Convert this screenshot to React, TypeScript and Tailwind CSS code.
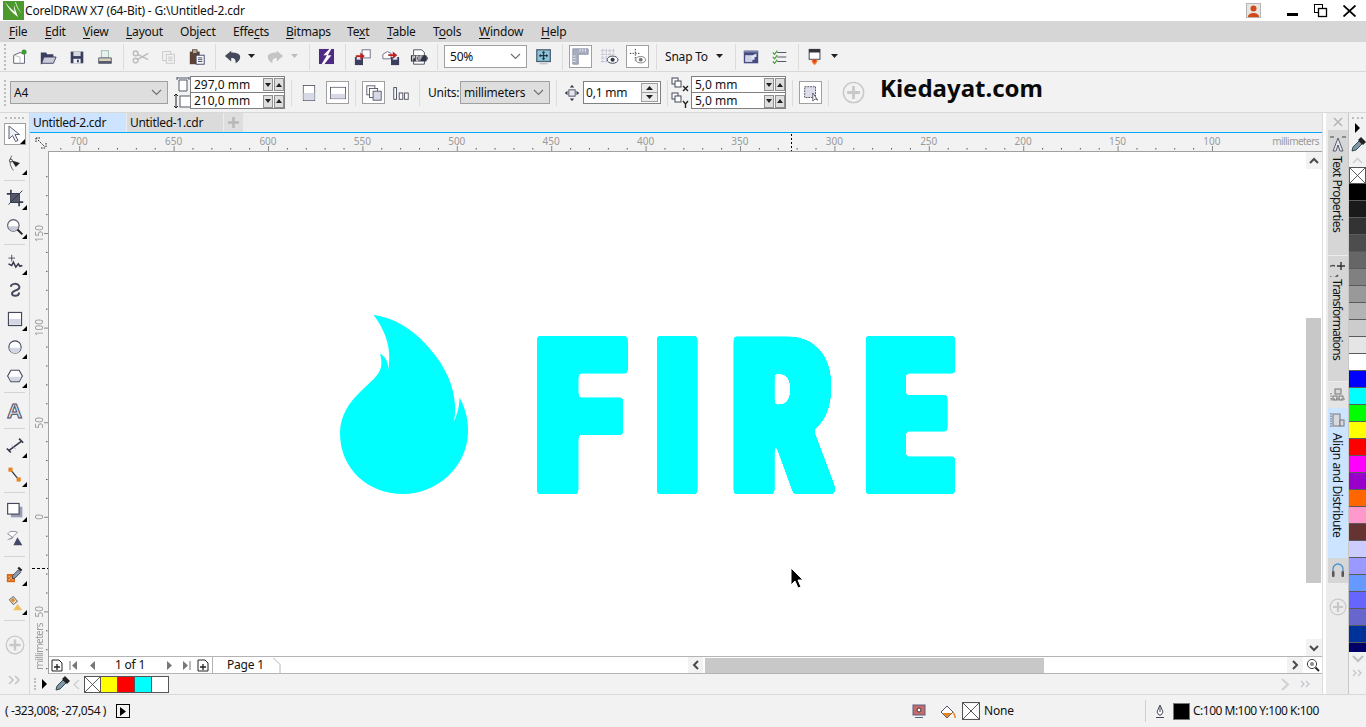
import type { ReactNode } from "react";

const ui = "font-['Noto_Sans','Open_Sans',sans-serif]";

function S({ children, w = 22, h = 22 }: { children: ReactNode; w?: number; h?: number }) {
  return (
    <svg width={w} height={h} viewBox={`0 0 ${w} ${h}`} fill="none">
      {children}
    </svg>
  );
}

function Btn({ children, className = "" }: { children?: ReactNode; className?: string }) {
  return <div className={`flex h-[24px] w-[28px] shrink-0 items-center justify-center [&>svg]:scale-90 ${className}`}>{children}</div>;
}

function Narrow({ children, className = "" }: { children?: ReactNode; className?: string }) {
  return <div className={`flex h-[24px] shrink-0 items-center justify-center ${className}`}>{children}</div>;
}

function Toggled({ children, className = "" }: { children?: ReactNode; className?: string }) {
  return (
    <div className={`flex h-[23px] w-[23px] shrink-0 items-center justify-center border border-[#a0a0a0] bg-white [&>svg]:scale-90 ${className}`}>
      {children}
    </div>
  );
}

function Sep({ className = "" }: { className?: string }) {
  return <div className={`h-[26px] w-px shrink-0 bg-[#dcdcdc] ${className}`} />;
}

function Grip({ className = "" }: { className?: string }) {
  return <div className={`h-[26px] w-[2px] shrink-0 border-l-2 border-dotted border-[#bdbdbd] ${className}`} />;
}

function Caret({ className = "" }: { className?: string }) {
  return (
    <svg width="8" height="5" viewBox="0 0 8 5" className={`shrink-0 ${className}`}>
      <path d="M0 0h7L3.5 4z" fill="currentColor" />
    </svg>
  );
}

function Chevron() {
  return (
    <svg width="11" height="7" viewBox="0 0 11 7" fill="none">
      <path d="M1 1l4.5 4.5L10 1" stroke="#707070" strokeWidth="1.2" />
    </svg>
  );
}

function Combo({ label, className }: { label: string; className: string }) {
  return (
    <div className={`flex h-[23px] shrink-0 items-center justify-between border border-[#a0a0a0] pl-[3px] pr-[5px] text-[12px] text-[#111] ${className}`}>
      <span>{label}</span>
      <Chevron />
    </div>
  );
}

function SpinRow({ value, top }: { value: string; top?: boolean }) {
  return (
    <div className={`flex h-[16px] items-center ${top ? "border-b border-[#808080]" : ""}`}>
      <span className="w-[73px] pl-[3px] text-[12px] leading-none tracking-normal text-[#111]">{value}</span>
      <span className="mr-px flex h-[13px] w-[10px] items-center justify-center border border-[#909090] bg-[#dedede] text-[#222]">
        <svg width="6" height="4" viewBox="0 0 6 4"><path d="M0 0h6L3 4z" fill="currentColor" /></svg>
      </span>
      <span className="flex h-[13px] w-[10px] items-center justify-center border border-[#909090] bg-[#dedede] text-[#222]">
        <svg width="6" height="4" viewBox="0 0 6 4"><path d="M0 4h6L3 0z" fill="currentColor" /></svg>
      </span>
    </div>
  );
}

function Spin({ a, b }: { a: string; b: string }) {
  return (
    <div className="h-[33px] w-[95px] shrink-0 border border-[#808080] bg-white">
      <SpinRow value={a} top />
      <SpinRow value={b} />
    </div>
  );
}

function Plus({ size = 25 }: { size?: number }) {
  return (
    <svg width={size} height={size} viewBox="0 0 25 25" fill="none">
      <circle cx="12.5" cy="12.5" r="11" stroke="#c8c8c8" strokeWidth="1.6" />
      <path d="M12.5 5.5v14M5.5 12.5h14" stroke="#c8c8c8" strokeWidth="3" />
    </svg>
  );
}

const navy = "#3a3f5e";

const icons = {
  coreldraw: (
    <S w={21} h={19}>
      <rect width="21" height="19" fill="#4c9a2e" />
      <path d="M2 1c3 6 7 11 13 15-2-5-3-8-4-12 0 3 0 5 1 7C8 8 5 5 2 1z" fill="#fff" />
      <path d="M13 1c1 4 3 8 6 12-3-3-6-7-7-12z" fill="#cfe8c0" />
    </S>
  ),
  newDoc: (
    <S>
      <path d="M4 9l7-3 5 2v10H4z" fill="#fff" stroke="#55586a" />
      <path d="M4 9l7 2v7" stroke="#b5b5c0" />
      <circle cx="15.5" cy="5.5" r="2.8" fill="#3f9a38" />
    </S>
  ),
  open: (
    <S>
      <path d="M3 6h6l1 2h7v3H7l-3 8H3z" fill={navy} />
      <path d="M6.5 11H20l-3 7H4z" fill="#c9ccd8" stroke={navy} />
    </S>
  ),
  save: (
    <S>
      <path d="M4 5h14v13H4z" fill={navy} />
      <rect x="7" y="5" width="8" height="5" fill="#d8dae2" />
      <rect x="7" y="13" width="8" height="5" fill="#f0f0f4" />
      <rect x="11" y="14" width="2" height="3" fill={navy} />
    </S>
  ),
  print: (
    <S>
      <rect x="7" y="4" width="8" height="8" fill="#e4f3ef" stroke="#9fb5b0" />
      <path d="M4 12h14v6H4z" fill="#d8d2bd" stroke="#55586a" />
      <rect x="4" y="15.5" width="14" height="2.5" fill="#55586a" />
    </S>
  ),
  cut: (
    <S>
      <circle cx="5" cy="7" r="2.6" stroke="#bcbcbc" strokeWidth="1.6" />
      <circle cx="5" cy="15" r="2.6" stroke="#bcbcbc" strokeWidth="1.6" />
      <path d="M7 8l12 6M7 14l12-7" stroke="#bcbcbc" strokeWidth="1.6" />
    </S>
  ),
  copy: (
    <S>
      <rect x="4" y="5" width="9" height="10" fill="#f2f2f2" stroke="#c8c8c8" />
      <rect x="8" y="8" width="9" height="10" fill="#f2f2f2" stroke="#c8c8c8" />
      <path d="M10 11h5M10 13h5M10 15h5" stroke="#c8c8c8" />
    </S>
  ),
  paste: (
    <S>
      <rect x="3" y="5" width="11" height="14" fill="#5a4334" />
      <rect x="6" y="3" width="5" height="4" fill="#b9b0a6" stroke="#5a4334" />
      <rect x="10" y="9" width="9" height="10" fill="#fff" stroke="#3a3f5e" />
      <path d="M12 12h5M12 14h5M12 16h5" stroke="#3a3f5e" />
    </S>
  ),
  undo: (
    <S>
      <path d="M9 4L2 10l7 6v-4c4 0 5 2 5 6 3-2 5-4 5-7 0-4-5-5-10-5z" fill="#444a5c" />
    </S>
  ),
  redo: (
    <S>
      <path d="M13 4l7 6-7 6v-4c-4 0-5 2-5 6-3-2-5-4-5-7 0-4 5-5 10-5z" fill="#c4c4c4" />
    </S>
  ),
  connect: (
    <S w={17} h={17}>
      <rect width="17" height="17" fill="#4f2a85" />
      <path d="M12 0L5 7h4L3 17h3l8-10h-4l4-7z" fill="#fff" />
    </S>
  ),
  importFile: (
    <S>
      <rect x="10" y="3" width="9" height="9" fill="#fff" stroke="#666a80" />
      <rect x="2" y="11" width="9" height="9" fill={navy} />
      <rect x="4" y="11" width="5" height="3" fill="#dde" />
      <path d="M3 9h5V6l5 4-5 4v-3H3z" fill="#c02020" />
    </S>
  ),
  exportFile: (
    <S>
      <path d="M2 8l5-3 4 2v6H2z" fill="#fff" stroke="#666a80" />
      <rect x="11" y="11" width="9" height="9" fill={navy} />
      <rect x="13" y="11" width="5" height="3" fill="#dde" />
      <path d="M8 8h5V5l5 4-5 4v-3H8z" fill="#c02020" />
    </S>
  ),
  pdf: (
    <S>
      <path d="M5 3h9l3 3v13H5z" fill="#fff" stroke="#44485a" />
      <rect x="2" y="9" width="17" height="7" fill="#2f3345" />
      <path d="M4 15v-5h2v2H4M8 15v-5h2v5H8M12 15v-5h3M12 12h2" stroke="#fff" strokeWidth=".9" />
      <path d="M19 9l2 3.5-2 3.5z" fill="#2f3345" />
    </S>
  ),
  fullscreen: (
    <S>
      <rect x="3" y="3" width="15" height="13" fill="#8ac6d6" stroke="#4b5c72" strokeWidth="1.4" />
      <path d="M10.5 5v9M6 9.5h9" stroke="#273248" strokeWidth="1.4" />
      <path d="M10.5 4.5l2 2h-4zM10.5 14.5l2-2h-4zM5.5 9.5l2-2v4zM15.5 9.5l-2-2v4z" fill="#273248" />
      <path d="M6 18.5h9" stroke="#a5adc0" />
    </S>
  ),
  rulers: (
    <S w={19} h={19}>
      <path d="M1 1h17v6H7v11H1z" fill="#a9aec0" stroke="#8d92a5" />
      <path d="M9 1v3M12 1v3M15 1v3M1 9h3M1 12h3M1 15h3" stroke="#eceef5" />
    </S>
  ),
  grid: (
    <S>
      <path d="M2 4h15M2 8h15M2 12h10M2 16h8M4 2v16M8 2v16M12 2v10M16 2v6" stroke="#a8acc4" strokeDasharray="1 1" />
      <ellipse cx="15" cy="14" rx="6" ry="4" fill="#fff" stroke="#33384a" />
      <circle cx="15" cy="14" r="2.3" fill="#33384a" />
    </S>
  ),
  guides: (
    <S w={20} h={20}>
      <path d="M1 6h11M7 1v13" stroke="#222" strokeDasharray="1.5 1.5" />
      <ellipse cx="13" cy="13" rx="5.5" ry="3.6" fill="#fff" stroke="#777" />
      <circle cx="13" cy="13" r="2.1" fill="#777" />
    </S>
  ),
  publish: (
    <S>
      <rect x="3" y="4" width="16" height="14" fill="#454a82" />
      <rect x="4.5" y="9" width="8" height="7.5" fill="#cfd2e4" />
      <path d="M11 10l6-3v4h-2v3h-3z" fill="#e5e6f0" />
      <rect x="3" y="4" width="16" height="2" fill="#7d82aa" />
    </S>
  ),
  checks: (
    <S>
      <path d="M8 6h10M8 11h10M8 16h10" stroke="#55586a" strokeWidth="1.2" />
      <path d="M3 6l2 2 3-4M3 11l2 2 3-4M3 16l2 2 3-4" stroke="#4b9c3c" strokeWidth="1.3" />
    </S>
  ),
  launcher: (
    <S>
      <rect x="4" y="2" width="13" height="12" fill="#33363f" />
      <rect x="5" y="6" width="11" height="7" fill="#fff" />
      <path d="M7 14c0 3 2 5 3.5 6 1.5-1 3.5-3 3.5-6z" fill="#f0802a" />
      <path d="M9 14c0 2 1 3 1.5 4 .5-1 1.5-2 1.5-4z" fill="#e03020" />
    </S>
  ),
  pageH: (
    <S w={14} h={15}>
      <path d="M3 3h8v11H3z" fill="#fff" stroke="#55586a" />
      <path d="M1 1h12M1 0v3M13 0v3" stroke="#55586a" />
    </S>
  ),
  pageV: (
    <S w={18} h={15}>
      <rect x="6" y="2" width="11" height="11" fill="#fff" stroke="#55586a" />
      <path d="M2 0v14M0 2l2-2 2 2M0 12l2 2 2-2" stroke="#222" />
    </S>
  ),
  portrait: (
    <S w={14} h={18}>
      <rect x=".5" y=".5" width="13" height="17" fill="#fff" stroke="#44485a" />
      <rect x="1" y="9" width="12" height="8" fill="#d8d9e6" />
    </S>
  ),
  landscape: (
    <S w={18} h={14}>
      <rect x=".5" y=".5" width="17" height="13" fill="#fff" stroke="#44485a" />
      <rect x="1" y="8" width="16" height="5" fill="#d8d9e6" />
    </S>
  ),
  allPages: (
    <S w={18} h={18}>
      <rect x="1" y="1" width="9" height="10" fill="#fff" stroke="#55586a" />
      <rect x="4" y="4" width="9" height="10" fill="#fff" stroke="#55586a" />
      <rect x="8" y="7" width="9" height="10" fill="#d8d9e6" stroke="#55586a" />
    </S>
  ),
  currentPage: (
    <S w={18} h={18}>
      <rect x="1" y="3" width="3" height="13" fill="#fff" stroke="#44485a" />
      <rect x="7" y="9" width="4" height="7" fill="#fff" stroke="#44485a" />
      <rect x="13" y="9" width="4" height="7" fill="#fff" stroke="#44485a" />
    </S>
  ),
  nudge: (
    <S w={16} h={18}>
      <rect x="4.5" y="5.5" width="7" height="7" fill="#e6e6ee" stroke="#44485a" />
      <path d="M8 0l2.5 3h-5zM8 18l2.5-3h-5zM0 9l3-2.5v5zM16 9l-3-2.5v5z" fill="#33384a" />
    </S>
  ),
  dupeX: (
    <S w={19} h={15}>
      <rect x="1" y="1" width="6" height="6" fill="#fff" stroke="#44485a" />
      <rect x="4" y="4" width="6" height="6" fill="#fff" stroke="#44485a" />
      <path d="M12 9l5 5M17 9l-5 5" stroke="#222" strokeWidth="1.4" />
    </S>
  ),
  dupeY: (
    <S w={19} h={16}>
      <rect x="1" y="1" width="6" height="6" fill="#fff" stroke="#44485a" />
      <rect x="4" y="4" width="6" height="6" fill="#fff" stroke="#44485a" />
      <path d="M12 9l2.500 3 2.500-3M14.500 12v4" stroke="#222" strokeWidth="1.4" />
    </S>
  ),
  treat: (
    <S w={20} h={20}>
      <rect x="3" y="3" width="12" height="12" fill="#dcdde8" stroke="#44485a" strokeDasharray="2 1" />
      <path d="M12 10v9l2.500-2.500 3 1.500z" fill="#fff" stroke="#55586a" />
    </S>
  ),
  pick: (
    <S w={16} h={18}>
      <path d="M2 1v13l3.500-3.500 3 6 2.500-1-3-6H12.500z" fill="#eef0f6" stroke="#5a5e72" />
    </S>
  ),
  shape: (
    <S>
      <path d="M7 2c-3 5-3 12 2 18" stroke="#44485a" />
      <circle cx="6" cy="8" r="1.800" fill="#fff" stroke="#222" />
      <path d="M7 8l10 3-5 5z" fill="#222" />
    </S>
  ),
  crop: (
    <S>
      <path d="M6 1v15h15M1 6h15v15" stroke="#33384a" strokeWidth="2" />
      <rect x="6" y="6" width="10" height="10" fill="#55586a" />
      <path d="M3 19L20 2" stroke="#33384a" strokeWidth="1.2" />
    </S>
  ),
  zoom: (
    <S>
      <circle cx="9" cy="9" r="7" fill="#fff" stroke="#55586a" strokeWidth="1.400" />
      <path d="M3 10a6 6 0 0012 0z" fill="#c8cad8" />
      <path d="M14 14l6 6" stroke="#222" strokeWidth="2.400" />
    </S>
  ),
  freehand: (
    <S>
      <path d="M7 1v8M3 5h8" stroke="#33384a" />
      <path d="M3 12l4 2 2-4 3 6 3-4 2 3 3-1" stroke="#33384a" strokeWidth="1.800" />
    </S>
  ),
  smart: (
    <S>
      <path d="M6 7c0-4 8-5 10-1s-4 5-7 7-2 5 2 5 5-2 5-4" stroke="#44485a" strokeWidth="2.400" />
    </S>
  ),
  rect: (
    <S>
      <rect x="3" y="3" width="16" height="16" fill="#fff" stroke="#44485a" strokeWidth="1.400" />
      <rect x="4" y="11" width="14" height="7" fill="#d4d6e2" />
    </S>
  ),
  ellipse: (
    <S>
      <circle cx="11" cy="11" r="7.500" fill="#fff" stroke="#44485a" strokeWidth="1.400" />
      <path d="M4 12h14a7 7 0 01-14 0z" fill="#d4d6e2" />
    </S>
  ),
  polygon: (
    <S>
      <path d="M6 4h10l4 7-4 7H6l-4-7z" fill="#fff" stroke="#44485a" strokeWidth="1.400" />
      <path d="M3 12h16l-3 5H6z" fill="#d4d6e2" />
    </S>
  ),
  dimension: (
    <S>
      <path d="M3 17L19 5" stroke="#33384a" strokeWidth="2" />
      <path d="M1 14l5 5M16 2l5 5" stroke="#33384a" strokeWidth="2" />
      <path d="M7 10l5 5" stroke="#9a9eb0" />
    </S>
  ),
  connector: (
    <S>
      <path d="M6 5l9 11" stroke="#33384a" strokeWidth="1.600" />
      <rect x="3" y="2" width="5" height="5" fill="#e8821e" />
      <rect x="13" y="14" width="5" height="5" fill="#e8821e" />
    </S>
  ),
  shadow: (
    <S>
      <rect x="6" y="7" width="14" height="13" fill="#9a9db5" />
      <rect x="2" y="3" width="14" height="13" fill="#fff" stroke="#44485a" strokeWidth="1.400" />
    </S>
  ),
  transparency: (
    <S>
      <path d="M2 6l6 4 6-6-3-1H5z" fill="#fff" stroke="#7a7e90" />
      <path d="M5 12l4-2M2 13l6-2" stroke="#7a7e90" />
      <path d="M14 10l6 10H9z" fill="#44496a" />
    </S>
  ),
  eyedrop: (
    <S>
      <rect x="1" y="11" width="10" height="10" fill="#d8661a" />
      <path d="M3 13h2v2H3zM7 13h2v2H7zM5 15h2v2H5zM3 17h2v2H3zM7 17h2v2H7z" fill="#f2b26a" />
      <path d="M8 13l7-7 3 3-7 7-3 1z" fill="#8a9ab0" stroke="#33384a" />
      <path d="M14 4l2-2 4 4-2 2z" fill="#222" />
    </S>
  ),
  fill: (
    <S>
      <path d="M4 7l5-4 5 6-5 4z" fill="#e8e0c0" stroke="#44485a" />
      <path d="M6 7l3-2 2 3-3 2z" fill="#e8821e" />
      <path d="M14 12l6 8H9z" fill="#f0c060" />
    </S>
  ),
  dropper: (
    <S w={16} h={16}>
      <path d="M2 14l1-4 6-6 3 3-6 6z" fill="#7d97a8" stroke="#33484f" />
      <path d="M8 3l3-3 5 5-3 3z" fill="#222" />
    </S>
  ),
};

const menus: { pre: string; key: string; post: string; w: string }[] = [
  { pre: "", key: "F", post: "ile", w: "w-[36px]" },
  { pre: "", key: "E", post: "dit", w: "w-[38px]" },
  { pre: "", key: "V", post: "iew", w: "w-[43px]" },
  { pre: "", key: "L", post: "ayout", w: "w-[54px]" },
  { pre: "Ob", key: "j", post: "ect", w: "w-[53px]" },
  { pre: "Effe", key: "c", post: "ts", w: "w-[53px]" },
  { pre: "", key: "B", post: "itmaps", w: "w-[61px]" },
  { pre: "Te", key: "x", post: "t", w: "w-[40px]" },
  { pre: "", key: "T", post: "able", w: "w-[46px]" },
  { pre: "T", key: "o", post: "ols", w: "w-[46px]" },
  { pre: "", key: "W", post: "indow", w: "w-[62px]" },
  { pre: "", key: "H", post: "elp", w: "w-[40px]" },
];

function TitleBar() {
  return (
    <div className="flex h-[21px] shrink-0 items-center bg-white">
      <div className="ml-[3px] mr-[1px] flex w-[21px]">{icons.coreldraw}</div>
      <span className="text-[12px] text-[#111]">CorelDRAW X7 (64-Bit) - G:\Untitled-2.cdr</span>
      <div className="ml-auto flex items-center">
        <svg width="15" height="15" viewBox="0 0 15 15">
          <rect width="15" height="15" fill="#b5b5b5" />
          <rect x="1" y="1" width="13" height="13" fill="#e9e4e0" />
          <circle cx="7.500" cy="5.500" r="3" fill="#d04a1c" />
          <path d="M2 14c0-3 3-4 5.500-4s5.500 1 5.500 4z" fill="#d04a1c" />
        </svg>
        <div className="ml-[26px] mt-[7px] h-[3px] w-[11px] bg-black" />
        <svg width="14" height="14" viewBox="0 0 14 14" fill="none" className="ml-[16px]">
          <rect x=".5" y=".5" width="8" height="8" stroke="#000" />
          <rect x="4.500" y="4.500" width="8" height="8" fill="#fff" stroke="#000" strokeWidth="1.300" />
        </svg>
        <svg width="13" height="12" viewBox="0 0 13 12" fill="none" className="ml-[15px] mr-[10px]">
          <path d="M.5.5l12 11M12.500.5l-12 11" stroke="#000" strokeWidth="1.800" />
        </svg>
      </div>
    </div>
  );
}

function MenuBar() {
  return (
    <div className="flex h-[21px] shrink-0 items-center bg-[#d6d6d6] pl-[9px] text-[12px] text-[#111]">
      {menus.map((m) => (
        <div key={m.pre + m.key + m.post} className={`shrink-0 ${m.w}`}>
          {m.pre}
          <span className="underline underline-offset-2">{m.key}</span>
          {m.post}
        </div>
      ))}
    </div>
  );
}

function StandardBar() {
  return (
    <div className="flex h-[30px] shrink-0 items-center border-b border-[#d8d8d8] bg-[#f2f2f2] text-[12px] text-[#111]">
      <Grip className="ml-[4px]" />
      <Btn>{icons.newDoc}</Btn>
      <Btn>{icons.open}</Btn>
      <Btn className="!w-[29px]">{icons.save}</Btn>
      <Btn>{icons.print}</Btn>
      <Sep className="ml-[4px] mr-[3px]" />
      <Btn>{icons.cut}</Btn>
      <Btn>{icons.copy}</Btn>
      <Btn>{icons.paste}</Btn>
      <Sep className="ml-[4px] mr-[3px]" />
      <Btn>{icons.undo}</Btn>
      <Narrow className="w-[10px] text-[#222]"><Caret /></Narrow>
      <Btn className="ml-[4px]">{icons.redo}</Btn>
      <Narrow className="w-[12px] text-[#bdbdbd]"><Caret /></Narrow>
      <Sep className="ml-[8px] mr-[2px]" />
      <Btn>{icons.connect}</Btn>
      <Sep className="ml-[5px] mr-[3px]" />
      <Btn>{icons.importFile}</Btn>
      <Btn>{icons.exportFile}</Btn>
      <Btn>{icons.pdf}</Btn>
      <Sep className="ml-[4px] mr-[6px]" />
      <Combo label="50%" className="w-[83px] border-[#808080] !pl-[5px] bg-white" />
      <Btn className="ml-[3px]">{icons.fullscreen}</Btn>
      <Sep className="ml-[4px] mr-[6px]" />
      <Toggled>{icons.rulers}</Toggled>
      <Btn className="ml-[3px]">{icons.grid}</Btn>
      <Toggled className="ml-[3px]">{icons.guides}</Toggled>
      <Sep className="ml-[7px]" />
      <span className="ml-[8px] w-[42px] shrink-0 whitespace-nowrap">Snap To</span>
      <Caret className="ml-[9px] text-[#222]" />
      <Sep className="ml-[11px]" />
      <Btn className="ml-[1px]">{icons.publish}</Btn>
      <Btn className="ml-[1px]">{icons.checks}</Btn>
      <Sep className="ml-[4px]" />
      <Btn className="ml-[2px]">{icons.launcher}</Btn>
      <Caret className="ml-[2px] text-[#222]" />
    </div>
  );
}

function PropertyBar() {
  return (
    <div className="flex h-[41px] shrink-0 items-center border-b border-[#d8d8d8] bg-[#f2f2f2] pt-[1px] text-[12px] text-[#111]">
      <Grip className="ml-[4px]" />
      <Combo label="A4" className="ml-[4px] w-[158px] bg-[#dedede]" />
      <div className="ml-[7px] flex w-[15px] shrink-0 flex-col items-center gap-[2px]">
        {icons.pageH}
        {icons.pageV}
      </div>
      <Spin a="297,0 mm" b="210,0 mm" />
      <Sep className="ml-[6px]" />
      <Btn className="ml-[5px] !w-[24px]">{icons.portrait}</Btn>
      <Toggled className="ml-[5px]">{icons.landscape}</Toggled>
      <Sep className="ml-[6px]" />
      <Toggled className="ml-[6px]">{icons.allPages}</Toggled>
      <Btn className="ml-[4px] !w-[24px]">{icons.currentPage}</Btn>
      <Sep className="ml-[6px]" />
      <span className="ml-[8px] w-[32px] shrink-0">Units:</span>
      <Combo label="millimeters" className="w-[90px] bg-[#dedede]" />
      <Sep className="ml-[6px]" />
      <Btn className="ml-[3px] !w-[23px]">{icons.nudge}</Btn>
      <div className="flex h-[23px] w-[78px] shrink-0 items-center justify-between border border-[#808080] bg-white pl-[2px] pr-[2px]">
        <span>0,1 mm</span>
        <span className="flex h-[19px] w-[17px] flex-col border border-[#a0a0a0] bg-[#ececec] text-[#222]">
          <span className="flex h-[9px] items-center justify-center border-b border-[#a0a0a0]">
            <svg width="7" height="4" viewBox="0 0 7 4"><path d="M0 4h7L3.500 0z" fill="currentColor" /></svg>
          </span>
          <span className="flex h-[8px] items-center justify-center">
            <svg width="7" height="4" viewBox="0 0 7 4"><path d="M0 0h7L3.500 4z" fill="currentColor" /></svg>
          </span>
        </span>
      </div>
      <Sep className="ml-[6px]" />
      <div className="flex w-[23px] shrink-0 flex-col items-center gap-0 pl-[2px]">
        {icons.dupeX}
        {icons.dupeY}
      </div>
      <Spin a="5,0 mm" b="5,0 mm" />
      <Sep className="ml-[6px]" />
      <Toggled className="ml-[6px]">{icons.treat}</Toggled>
      <Sep className="ml-[6px]" />
      <Narrow className="w-[48px]"><Plus size={23} /></Narrow>
      <span className="ml-[3px] mt-[-9px] font-['Noto_Sans',sans-serif] text-[24px] font-bold leading-none tracking-normal text-[#0a0a0a]">Kiedayat.com</span>
    </div>
  );
}

function Tool({ icon, className, more = true }: { icon: ReactNode; className: string; more?: boolean }) {
  return (
    <div className={`relative flex h-[22px] w-[22px] shrink-0 items-center justify-center self-center [&>svg:first-child]:h-[18px] [&>svg:first-child]:w-[18px] ${className}`}>
      {icon}
      {more && (
        <svg width="5" height="5" viewBox="0 0 5 5" className="absolute bottom-[-1px] right-[-1px]">
          <path d="M5 0v5H0z" fill="#000" />
        </svg>
      )}
    </div>
  );
}

function ToolSep({ className }: { className: string }) {
  return <div className={`mx-[4px] h-px shrink-0 bg-[#d4d4d4] ${className}`} />;
}

function Toolbox() {
  return (
    <div className="flex w-[30px] shrink-0 flex-col border-r border-[#d8d8d8] bg-[#f2f2f2]">
      <div className="mx-[5px] mt-[4px] h-[2px] border-t-2 border-dotted border-[#bdbdbd]" />
      <div className="relative mt-[4px] flex h-[22px] w-[22px] shrink-0 items-center justify-center self-center border border-[#a0a0a0] bg-white">
        {icons.pick}
        <svg width="5" height="5" viewBox="0 0 5 5" className="absolute bottom-0 right-0">
          <path d="M5 0v5H0z" fill="#000" />
        </svg>
      </div>
      <Tool icon={icons.shape} className="mt-[7px]" />
      <ToolSep className="mt-[6px]" />
      <Tool icon={icons.crop} className="mt-[6px]" />
      <Tool icon={icons.zoom} className="mt-[7px]" />
      <ToolSep className="mt-[6px]" />
      <Tool icon={icons.freehand} className="mt-[7px]" />
      <Tool icon={icons.smart} className="mt-[5px]" more={false} />
      <Tool icon={icons.rect} className="mt-[7px]" />
      <Tool icon={icons.ellipse} className="mt-[6px]" />
      <Tool icon={icons.polygon} className="mt-[7px]" />
      <ToolSep className="mt-[5px]" />
      <div className="relative mt-[7px] flex h-[22px] w-[22px] shrink-0 items-center justify-center self-center font-['Liberation_Sans',sans-serif] text-[21px] font-bold text-[#dfe1ea] [-webkit-text-stroke:1px_#4a4e62]">
        A
      </div>
      <ToolSep className="mt-[6px]" />
      <Tool icon={icons.dimension} className="mt-[6px]" />
      <Tool icon={icons.connector} className="mt-[7px]" />
      <ToolSep className="mt-[6px]" />
      <Tool icon={icons.shadow} className="mt-[6px]" />
      <Tool icon={icons.transparency} className="mt-[6px]" more={false} />
      <ToolSep className="mt-[7px]" />
      <Tool icon={icons.eyedrop} className="mt-[6px]" />
      <Tool icon={icons.fill} className="mt-[7px]" />
      <ToolSep className="mt-[6px]" />
      <div className="mt-[13px] flex h-[22px] shrink-0 items-center justify-center"><Plus size={20} /></div>
      <div className="mt-[13px] flex h-[22px] shrink-0 items-center justify-center">
        <svg width="14" height="10" viewBox="0 0 14 10" fill="none">
          <path d="M1 1l4 4-4 4M7 1l4 4-4 4" stroke="#c4c4cc" strokeWidth="1.600" />
        </svg>
      </div>
    </div>
  );
}

function Tabs() {
  return (
    <div className="flex h-[19px] shrink-0 items-stretch bg-[#ececec] text-[12px] leading-[19px] tracking-[-0.3px] text-[#111]">
      <div className="w-[96px] bg-[#cce4ff] pl-[3px]">Untitled-2.cdr</div>
      <div className="ml-px w-[96px] bg-[#dbdbdb] pl-[3px]">Untitled-1.cdr</div>
      <div className="ml-px flex w-[19px] items-center justify-center bg-[#dedede]">
        <svg width="11" height="11" viewBox="0 0 11 11"><path d="M5.500 0v11M0 5.500h11" stroke="#b8b8b8" strokeWidth="2.600" /></svg>
      </div>
    </div>
  );
}

const hLabels = [700, 650, 600, 550, 500, 450, 400, 350, 300, 250, 200, 150, 100];
const vLabels = [150, 100, 50, 0, 50];

function HRuler() {
  return (
    <div className="relative flex h-[18px] shrink-0 bg-[#f2f2f2] pl-[2px] pt-[1px] text-[10px] leading-[14px] tracking-normal text-[#9a9a9a]">
      {hLabels.map((n) => (
        <div key={n} className="w-[94.4px] shrink-0 text-center">{n}</div>
      ))}
      <span className="absolute right-[3px] top-[1px] tracking-[-0.55px]">millimeters</span>
      <svg width="1293" height="18" className="absolute left-0 top-0">
        {Array.from({ length: 66 }, (_, i) => {
          const x = 49.2 - 94.4 + i * 18.88;
          if (x < 18) return null;
          const major = i % 5 === 0;
          return <rect key={i} x={x} y={major ? 13 : 15} width="1" height={major ? 5 : 1.500} fill={major ? "#888" : "#555"} />;
        })}
        <path d="M761.500 1v17" stroke="#000" strokeDasharray="2 2" />
      </svg>
      <svg width="12" height="12" viewBox="0 0 12 12" fill="none" className="absolute left-[5px] top-[4px]">
        <path d="M1 1h4M1 1v4M3 3l7 7M11 6v5M6 11h5" stroke="#222" strokeDasharray="1.500 1" />
      </svg>
    </div>
  );
}

function VRuler() {
  return (
    <div className="relative flex h-[523px] w-[19px] shrink-0 flex-col border-r border-[#a0a0a0] bg-[#f2f2f2] pt-[35px] text-[10px] leading-none tracking-normal text-[#9a9a9a]">
      {vLabels.map((n, i) => (
        <div key={i} className="flex h-[94.600px] shrink-0 items-center pl-[4px]">
          <span className="rotate-180 [writing-mode:vertical-rl]">{n}</span>
        </div>
      ))}
      <span className="absolute bottom-[4px] left-[4px] rotate-180 tracking-[-0.55px] [writing-mode:vertical-rl]">millimeters</span>
      <svg width="18" height="523" className="absolute left-0 top-0">
        {Array.from({ length: 29 }, (_, i) => {
          const y = 82 - 3 * 18.92 + i * 18.92;
          const major = (i + 2) % 5 === 0;
          return <rect key={i} x={major ? 14 : 16} y={y} width={major ? 4 : 1.500} height="1" fill={major ? "#888" : "#555"} />;
        })}
        <path d="M2 417.500h16" stroke="#000" strokeDasharray="3 2" />
      </svg>
    </div>
  );
}

function ScrollArrow({ d, className = "" }: { d: string; className?: string }) {
  return (
    <div className={`flex shrink-0 items-center justify-center bg-[#f2f2f2] ${className}`}>
      <svg width="12" height="12" viewBox="0 0 12 12" fill="none">
        <path d={d} stroke="#4a4a4a" strokeWidth="2" />
      </svg>
    </div>
  );
}

function HeavyFilter({ id, r }: { id: string; r: string }) {
  return (
    <filter id={id} x="-30%" y="-30%" width="160%" height="160%">
      <feMorphology operator="dilate" radius={`${r} 0`} />
      <feGaussianBlur stdDeviation="2" />
      <feColorMatrix values="1 0 0 0 0  0 1 0 0 0  0 0 1 0 0  0 0 0 12 -5.500" />
    </filter>
  );
}

function Artwork() {
  return (
    <>
      <svg width="0" height="0" className="absolute">
        <defs>
          <HeavyFilter id="heavyI" r="0.5" />
          <HeavyFilter id="heavyF" r="3.5" />
          <HeavyFilter id="heavyE" r="4" />
          <HeavyFilter id="heavyR" r="5" />
        </defs>
      </svg>
      <svg width="150" height="200" viewBox="0 0 150 200" className="absolute left-[281px] top-[153px]">
        <path
          d="M43.500 10C62 12 84 24 100 44C116 62 124 82 125 100C125.500 106 125 112 123.500 117.500C127 110 129.500 102 129.500 92.500C135 102 138.500 115 138 127C137.500 161 108 189 73 189C38 189 10 164 10 128C10 110 20 97 30 87C40 77 49 71 51 62C52 57 51 53 50 48.500C58 53 61 63 55 75C60 64 60 50 58 40C56 30 50 18 43.500 10Z"
          fill="#00ffff"
        />
      </svg>
      <div className="absolute left-[488px] top-[188px] h-[158px] font-['Roboto',sans-serif] text-[207px] font-black leading-[158px] text-[#00ffff] [-webkit-text-stroke:10px_#00ffff]">
        <span className="absolute left-[-2px] top-0 origin-left scale-x-[0.782] whitespace-nowrap [filter:url(#heavyF)]">F</span>
        <span className="absolute left-[112px] top-0 origin-left scale-x-[0.9] whitespace-nowrap [filter:url(#heavyI)]">I</span>
        <span className="absolute left-[196px] top-0 origin-left scale-x-[0.727] whitespace-nowrap [filter:url(#heavyR)]">R</span>
        <span className="absolute left-[327px] top-0 origin-left scale-x-[0.75] whitespace-nowrap [filter:url(#heavyE)]">E</span>
      </div>
      <svg width="14" height="22" viewBox="0 0 14 22" className="absolute left-[741px] top-[415px]">
        <path d="M1 1v17l4-4 3 7 3-1-3-7h5z" fill="#000" stroke="#fff" />
      </svg>
    </>
  );
}

function PageRow() {
  return (
    <div className="flex h-[18px] shrink-0 items-center border-y border-[#b4b4b4] bg-white text-[12px] text-[#111]">
      <div className="flex w-[163px] shrink-0 items-center">
        <svg width="12" height="13" viewBox="0 0 12 13" fill="none" className="ml-[2px]">
          <path d="M1 1h7l3 3v8H1z" stroke="#222" /><path d="M6 5v6M3 8h6" stroke="#222" strokeWidth="1.300" />
        </svg>
        <svg width="9" height="9" viewBox="0 0 9 9" className="ml-[6px]"><path d="M1 0v9" stroke="#777" /><path d="M8 0v9L3 4.500z" fill="#777" /></svg>
        <svg width="7" height="9" viewBox="0 0 7 9" className="ml-[11px]"><path d="M6 0v9L1 4.500z" fill="#777" /></svg>
        <span className="ml-[11px] w-[46px] shrink-0 text-center leading-none">1 of 1</span>
        <svg width="7" height="9" viewBox="0 0 7 9" className="ml-[13px]"><path d="M1 0v9l5-4.500z" fill="#777" /></svg>
        <svg width="9" height="9" viewBox="0 0 9 9" className="ml-[9px]"><path d="M8 0v9" stroke="#777" /><path d="M1 0v9l5-4.500z" fill="#777" /></svg>
        <svg width="12" height="13" viewBox="0 0 12 13" fill="none" className="ml-[6px]">
          <path d="M1 1h7l3 3v8H1z" stroke="#222" /><path d="M6 5v6M3 8h6" stroke="#222" strokeWidth="1.300" />
        </svg>
      </div>
      <div className="relative flex h-[16px] w-[68px] shrink-0 items-center border-l border-[#b4b4b4] pl-[14px]">
        Page 1
        <svg width="8" height="16" viewBox="0 0 8 16" fill="none" className="absolute right-[-1px] top-0">
          <path d="M0 .500l7 7v8.500" stroke="#b4b4b4" />
        </svg>
      </div>
      <div className="flex h-full flex-1 items-stretch" />
      <ScrollArrow d="M8 2L4 6l4 4" className="mr-[2px] h-[16px] w-[15px]" />
      <div className="h-[15px] w-[339px] shrink-0 bg-[#c8c8c8]" />
      <div className="w-[243px] shrink-0" />
      <ScrollArrow d="M4 2l4 4-4 4" className="h-[16px] w-[16px]" />
      <div className="flex w-[19px] shrink-0 items-center justify-center">
        <svg width="14" height="14" viewBox="0 0 14 14" fill="none">
          <circle cx="6" cy="6" r="4.600" stroke="#444" />
          <circle cx="6" cy="6" r="2" fill="#888" />
          <path d="M9.500 9.500L13 13" stroke="#222" strokeWidth="1.800" />
        </svg>
      </div>
    </div>
  );
}

const docColors = ["bg-[#ffff00]", "bg-[#ff0000]", "bg-[#00ffff]", "bg-white"];

function NoneSwatch({ className }: { className: string }) {
  return (
    <svg viewBox="0 0 17 17" className={className} fill="none">
      <rect x=".5" y=".5" width="16" height="16" fill="#fff" stroke="#555" />
      <path d="M1 1l15 15M16 1L1 16" stroke="#333" strokeWidth=".8" />
    </svg>
  );
}

function DocPalette() {
  return (
    <div className="flex h-[20px] shrink-0 items-center bg-[#f2f2f2]">
      <div className="ml-[4px] h-[12px] w-[2px] border-l-2 border-dotted border-[#bdbdbd]" />
      <svg width="7" height="10" viewBox="0 0 7 10" className="ml-[5px]"><path d="M1 0v10l5-5z" fill="#000" /></svg>
      <div className="ml-[6px]">{icons.dropper}</div>
      <svg width="7" height="11" viewBox="0 0 7 11" fill="none" className="ml-[3px]"><path d="M6 1L1 5.500 6 10" stroke="#d0d0d0" strokeWidth="1.500" /></svg>
      <div className="ml-[4px] flex">
        <NoneSwatch className="h-[17px] w-[17px]" />
        {docColors.map((c) => (
          <div key={c} className={`ml-[-1px] h-[17px] w-[18px] border border-[#555] ${c}`} />
        ))}
      </div>
      <svg width="9" height="13" viewBox="0 0 9 13" fill="none" className="ml-auto"><path d="M1 1l6 5.500L1 12" stroke="#d0d0d0" strokeWidth="2" /></svg>
      <svg width="11" height="8" viewBox="0 0 11 8" fill="none" className="ml-[10px] mr-[11px]"><path d="M1 1l3 3-3 3M6 1l3 3-3 3" stroke="#c4c4cc" strokeWidth="1.200" /></svg>
    </div>
  );
}

function DockerTab({ icon, label, className, labelClass }: { icon: ReactNode; label: string; className: string; labelClass: string }) {
  return (
    <div className={`flex shrink-0 flex-col items-center text-[12px] text-[#111] ${className}`}>
      {icon}
      <span className={`mr-[3px] leading-[18px] [writing-mode:vertical-rl] ${labelClass}`}>{label}</span>
    </div>
  );
}

function Dockers() {
  return (
    <div className="flex w-[20px] shrink-0 flex-col bg-[#ececec]">
      <div className="flex h-[17px] shrink-0 items-center justify-center">
        <svg width="10" height="10" viewBox="0 0 10 10"><path d="M1 1l8 8M9 1L1 9" stroke="#b4b4b4" strokeWidth="1.500" /></svg>
      </div>
      <DockerTab
        className="h-[125px] bg-[#d6d6d6] pt-[5px]"
        labelClass="mt-[4px] tracking-[-0.55px]"
        label="Text Properties"
        icon={
          <svg width="16" height="17" viewBox="0 0 16 17" fill="none">
            <path d="M8 3L3 16h3l2-6 2 6h3z" fill="#e2e4ec" stroke="#5a5e72" />
            <path d="M0 2h4M12 2h4" stroke="#444" />
          </svg>
        }
      />
      <DockerTab
        className="mt-px h-[125px] bg-[#d6d6d6] pt-[5px]"
        labelClass="mt-[2px] tracking-[-0.8px]"
        label="Transformations"
        icon={
          <svg width="16" height="16" viewBox="0 0 16 16" fill="none">
            <path d="M5 5a6 6 0 103 9" stroke="#555" strokeWidth="1.600" />
            <path d="M11 1v8M7 5h8" stroke="#333" strokeWidth="1.400" />
          </svg>
        }
      />
      <div className="mt-px flex h-[26px] shrink-0 items-center justify-center bg-[#e4e4e4]">
        <svg width="16" height="16" viewBox="0 0 16 16" fill="none">
          <rect x="5" y="2" width="6" height="5" fill="#d8d8e0" stroke="#777" />
          <path d="M1 6v8M1 12h14" stroke="#777" strokeDasharray="1.500 1" />
          <rect x="3" y="9" width="4" height="4" stroke="#777" /><rect x="9" y="9" width="4" height="4" stroke="#777" />
        </svg>
      </div>
      <DockerTab
        className="h-[150px] bg-[#cce4ff] pt-[4px]"
        labelClass="mt-[5px] tracking-[-0.4px]"
        label="Align and Distribute"
        icon={
          <svg width="16" height="16" viewBox="0 0 16 16" fill="none">
            <path d="M1 1v14" stroke="#555" strokeDasharray="1.500 1" />
            <rect x="3" y="2" width="7" height="12" fill="#d8d8e0" stroke="#777" />
            <rect x="10" y="8" width="4" height="6" fill="#d8d8e0" stroke="#777" />
          </svg>
        }
      />
      <div className="flex h-[25px] shrink-0 items-center justify-center bg-[#d6d6d6]">
        <svg width="14" height="16" viewBox="0 0 14 16" fill="none">
          <path d="M2 8V6a5 5 0 0110 0v2" stroke="#4a90d0" strokeWidth="1.300" />
          <rect x="1" y="8" width="2.500" height="6" rx="1" fill="#555" />
          <rect x="10.500" y="8" width="2.500" height="6" rx="1" fill="#555" />
        </svg>
      </div>
      <div className="mt-[15px] flex justify-center"><Plus size={18} /></div>
    </div>
  );
}

const paletteColors = [
  "bg-[#000000]", "bg-[#1a1a1a]", "bg-[#333333]", "bg-[#4d4d4d]", "bg-[#666666]", "bg-[#808080]", "bg-[#999999]",
  "bg-[#b3b3b3]", "bg-[#cccccc]", "bg-[#e5e5e5]", "bg-[#ffffff]", "bg-[#0000ff]", "bg-[#00ffff]", "bg-[#00ff00]",
  "bg-[#ffff00]", "bg-[#ff0000]", "bg-[#ff00ff]", "bg-[#9900cc]", "bg-[#ff6600]", "bg-[#ff99cc]", "bg-[#663333]",
  "bg-[#ccccff]", "bg-[#9999ff]", "bg-[#6699ff]", "bg-[#6666ff]", "bg-[#6666cc]", "bg-[#003399]",
];

function Palette() {
  return (
    <div className="flex w-[18px] shrink-0 flex-col border-l border-[#c8c8c8] bg-[#f2f2f2]">
      <div className="mx-[3px] mt-[4px] h-[2px] border-t-2 border-dotted border-[#bdbdbd]" />
      <div className="mt-[4px] flex h-[11px] shrink-0 justify-center">
        <svg width="7" height="10" viewBox="0 0 7 10"><path d="M1 0v10l5-5z" fill="#000" /></svg>
      </div>
      <div className="mt-[3px] flex h-[16px] shrink-0 justify-center">{icons.dropper}</div>
      <div className="flex h-[14px] shrink-0 items-center justify-center">
        <svg width="11" height="7" viewBox="0 0 11 7" fill="none"><path d="M1 6l4.500-4.500L10 6" stroke="#d0d0d0" strokeWidth="1.600" /></svg>
      </div>
      <NoneSwatch className="h-[17px] w-[17px] shrink-0" />
      {paletteColors.map((c) => (
        <div key={c} className={`h-[17px] w-[17px] shrink-0 border-b border-[#5a5a5a] ${c}`} />
      ))}
      <div className="h-[9px] w-[17px] shrink-0 bg-[#000066]" />
      <div className="mt-[3px] flex justify-center">
        <svg width="12" height="8" viewBox="0 0 12 8" fill="none"><path d="M1 1l5 5 5-5" stroke="#c0c0c0" strokeWidth="2" /></svg>
      </div>
      <div className="mt-[6px] flex justify-center">
        <svg width="11" height="8" viewBox="0 0 11 8" fill="none"><path d="M1 1l3 3-3 3M6 1l3 3-3 3" stroke="#c4c4cc" strokeWidth="1.200" /></svg>
      </div>
    </div>
  );
}

function StatusBar() {
  return (
    <div className="flex h-[33px] shrink-0 items-center border-t border-[#d8d8d8] bg-[#f2f2f2] text-[12px] text-[#111]">
      <span className="ml-[5px] w-[106px] shrink-0 whitespace-nowrap tracking-[-0.4px]">( -323,008; -27,054 )</span>
      <div className="ml-[5px] flex h-[14px] w-[14px] items-center justify-center border border-black">
        <svg width="6" height="9" viewBox="0 0 6 9"><path d="M0 0v9l6-4.500z" fill="#000" /></svg>
      </div>
      <svg width="14" height="15" viewBox="0 0 14 15" fill="none" className="ml-[782px]">
        <rect x="1" y="1" width="12" height="10" fill="#c96a6a" stroke="#5a5e80" />
        <circle cx="7" cy="6" r="2" fill="#fff" stroke="#333" />
        <path d="M3 13.500h8" stroke="#5a5e80" />
      </svg>
      <svg width="16" height="15" viewBox="0 0 16 15" fill="none" className="ml-[14px]">
        <path d="M1 8l6-6 6 6-6 6z" fill="#fff" stroke="#55586a" />
        <path d="M2.500 9h9L7 13.500z" fill="#e8821e" />
        <path d="M13 8l2 4v2" stroke="#e8821e" strokeWidth="1.400" />
      </svg>
      <NoneSwatch className="ml-[6px] h-[18px] w-[18px] shrink-0" />
      <span className="ml-[4px] w-[30px] shrink-0">None</span>
      <div className="ml-[131px] h-[22px] w-px shrink-0 bg-[#d0d0d0]" />
      <svg width="10" height="15" viewBox="0 0 10 15" fill="none" className="ml-[9px]">
        <path d="M5 1L2 8l2 3h2l2-3z" fill="#fff" stroke="#44485a" />
        <path d="M5 3v5M1 13.500h8" stroke="#44485a" />
      </svg>
      <div className="ml-[8px] h-[17px] w-[17px] shrink-0 border border-[#777] bg-black" />
      <span className="ml-[3px] whitespace-nowrap tracking-[-0.5px]">C:100 M:100 Y:100 K:100</span>
    </div>
  );
}

export default function App() {
  return (
    <div className={`flex h-[727px] w-[1366px] flex-col overflow-hidden bg-[#f2f2f2] tracking-[-0.2px] ${ui}`}>
      <TitleBar />
      <MenuBar />
      <StandardBar />
      <PropertyBar />
      <div className="flex min-h-0 flex-1">
        <Toolbox />
        <div className="flex w-[1293px] shrink-0 flex-col border-r border-[#dcdcdc]">
          <Tabs />
          <div className="h-px shrink-0 bg-[#00aaff]" />
          <HRuler />
          <div className="flex h-[523px] shrink-0">
            <VRuler />
            <div className="flex min-w-0 flex-1 flex-col">
              <div className="flex min-h-0 flex-1 border-t border-[#a0a0a0] bg-white">
                <div className="relative flex-1">
                  <Artwork />
                </div>
                <div className="flex w-[16px] shrink-0 flex-col">
                  <ScrollArrow d="M2 8l4-4 4 4" className="h-[17px]" />
                  <div className="mt-[149px] h-[265px] w-[15px] shrink-0 bg-[#c8c8c8]" />
                  <div className="flex-1" />
                  <ScrollArrow d="M2 4l4 4 4-4" className="h-[17px]" />
                </div>
              </div>
              <PageRow />
            </div>
          </div>
          <DocPalette />
        </div>
        <div className="w-[3px] shrink-0 bg-white" />
        <div className="w-[2px] shrink-0 bg-[#ececec]" />
        <Dockers />
        <Palette />
      </div>
      <StatusBar />
    </div>
  );
}
